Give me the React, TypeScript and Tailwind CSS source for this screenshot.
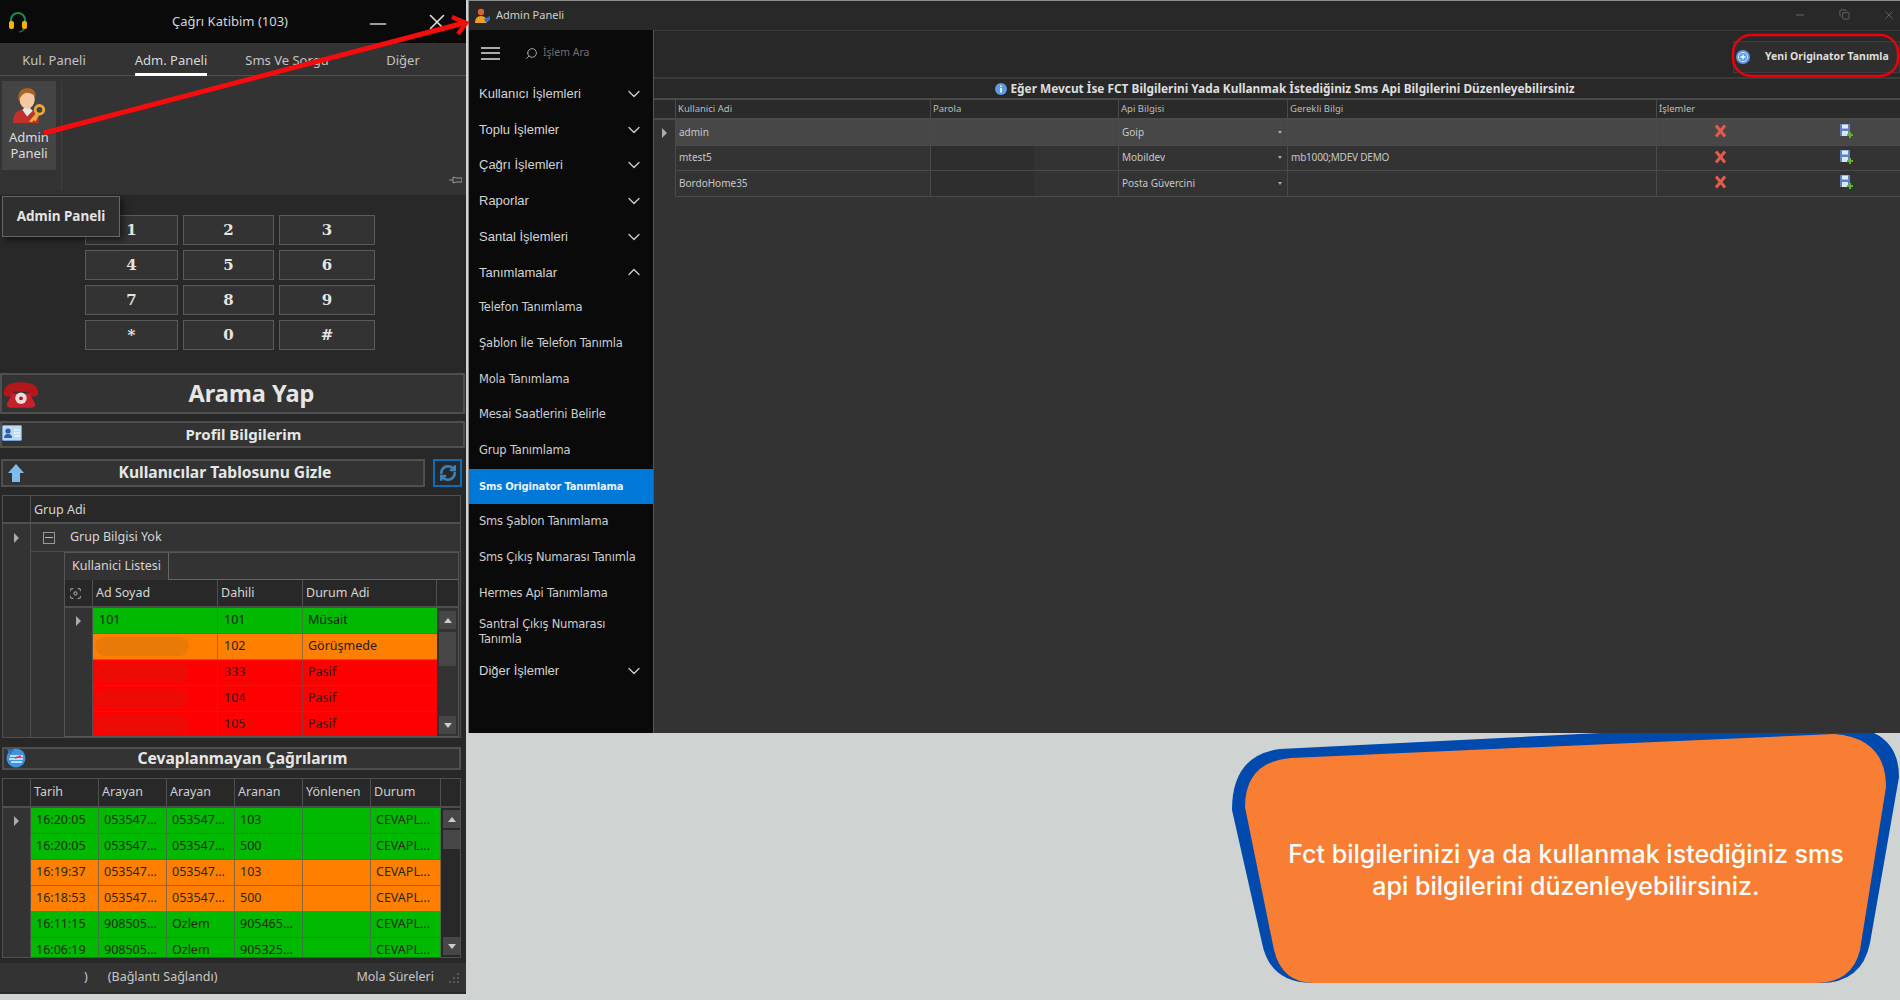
import React from "react";
import { ChevronDown, ChevronUp, Focus, Search, Minus, X, RefreshCw, Copy } from "lucide-react";

const noto = "[font-family:'Noto_Sans',sans-serif]";

const keys = ["1", "2", "3", "4", "5", "6", "7", "8", "9", "*", "0", "#"];

const users = [
  { name: "101", ext: "101", status: "Müsait", color: "bg-[#00b900]", blob: "" },
  { name: "", ext: "102", status: "Görüşmede", color: "bg-[#ff8000]", blob: "bg-[#ea7a08]" },
  { name: "", ext: "333", status: "Pasif", color: "bg-[#fe0000]", blob: "bg-[#ee0b06]" },
  { name: "", ext: "104", status: "Pasif", color: "bg-[#fe0000]", blob: "bg-[#ee0b06]" },
  { name: "", ext: "105", status: "Pasif", color: "bg-[#fe0000]", blob: "bg-[#ee0b06]" },
];

const calls = [
  ["16:20:05", "053547...", "053547...", "103", "", "CEVAPL...", "g"],
  ["16:20:05", "053547...", "053547...", "500", "", "CEVAPL...", "g"],
  ["16:19:37", "053547...", "053547...", "103", "", "CEVAPL...", "o"],
  ["16:18:53", "053547...", "053547...", "500", "", "CEVAPL...", "o"],
  ["16:11:15", "908505...", "Ozlem", "905465...", "", "CEVAPL...", "g"],
  ["16:06:19", "908505...", "Ozlem", "905325...", "", "CEVAPL...", "g"],
];

const originators = [
  { user: "admin", api: "Goip", info: "" },
  { user: "mtest5", api: "Mobildev", info: "mb1000;MDEV DEMO" },
  { user: "BordoHome35", api: "Posta Güvercini", info: "" },
];

const menuTop = ["Kullanıcı İşlemleri", "Toplu İşlemler", "Çağrı İşlemleri", "Raporlar", "Santal İşlemleri"];
const menuSub = [
  "Telefon Tanımlama",
  "Şablon İle Telefon Tanımla",
  "Mola Tanımlama",
  "Mesai Saatlerini Belirle",
  "Grup Tanımlama",
  "Sms Originator Tanımlama",
  "Sms Şablon Tanımlama",
  "Sms Çıkış Numarası Tanımla",
  "Hermes Api Tanımlama",
];

function Headset() {
  return (
    <svg width="22" height="22" viewBox="0 0 22 22">
      <path d="M4 12V9a7 7 0 0 1 14 0v3" fill="none" stroke="#1c8c46" strokeWidth="2" />
      <rect x="2" y="10" width="5" height="8" rx="2" fill="#f4b400" />
      <rect x="15" y="10" width="5" height="8" rx="2" fill="#f4b400" />
      <path d="M17 18q-2 3-5 3" fill="none" stroke="#1c8c46" strokeWidth="1.2" />
    </svg>
  );
}

function AdminIcon() {
  return (
    <svg width="36" height="38" viewBox="0 0 36 40">
      <path d="M1 38q0-12 9-14l6-1 6 2q5 2 6 6v7z" fill="#c22f2c" />
      <path d="M11 24l5 7 6-6-3-3h-6z" fill="#e8e6e0" />
      <ellipse cx="16" cy="13" rx="8" ry="10" fill="#f5c9a0" />
      <path d="M7 15Q5 2 16 1q9 0 9 9-4-4-10-4-5 1-8 9z" fill="#a8622a" />
      <circle cx="29" cy="24" r="4.5" fill="none" stroke="#e8a93c" strokeWidth="3" />
      <path d="M26 27l-8 9 3 1 2-2 2 1 4-7" fill="#e8a93c" />
    </svg>
  );
}

function PhoneIcon() {
  return (
    <svg width="38" height="29" viewBox="0 0 40 30">
      <path d="M2 13Q2 2 20 2t18 11q0 4-3 4h-5q-2 0-2-5H12q0 5-2 5H5q-3 0-3-4z" fill="#b3171c" />
      <path d="M11 14h18l6 11q0 4-4 4H9q-4 0-4-4z" fill="#c8202a" />
      <circle cx="20" cy="19" r="6" fill="#eedddd" />
      <circle cx="20" cy="19" r="2" fill="#a8161c" />
    </svg>
  );
}

function CardIcon() {
  return (
    <svg width="20" height="16" viewBox="0 0 20 16">
      <rect x="0.5" y="0.5" width="19" height="15" rx="1" fill="#bcd8f2" stroke="#6ea4d8" />
      <circle cx="6" cy="6" r="2.6" fill="#2f5f9e" />
      <path d="M2 13q0-4 4-4t4 4z" fill="#2f5f9e" />
      <path d="M12 5h6M12 8h6M12 11h6" stroke="#ffffff" strokeWidth="1.2" />
    </svg>
  );
}

function UpArrow() {
  return (
    <svg width="16" height="18" viewBox="0 0 16 18">
      <path d="M8 0l8 9h-4v9H4V9H0z" fill="#7fbcec" />
    </svg>
  );
}

function MissedIcon() {
  return (
    <svg width="20" height="20" viewBox="0 0 20 20">
      <circle cx="10" cy="10" r="9.5" fill="#3f93dd" />
      <path d="M4 8h13M3 11h14M5 14h11" stroke="#e9f3fb" strokeWidth="1.6" />
      <path d="M9 10l6-2" stroke="#d6332a" strokeWidth="1.4" />
      <path d="M1 1l7 1-4 5z" fill="#2e79bd" />
    </svg>
  );
}

function SaveIcon() {
  return (
    <svg width="13" height="14" viewBox="0 0 13 14">
      <rect x="0" y="0" width="10" height="12" fill="#5f82bd" />
      <rect x="2" y="0.5" width="6" height="4" fill="#e4ebf4" />
      <rect x="2" y="7" width="6" height="5" fill="#dfe5ee" />
      <path d="M10 8v6M7 11h6" stroke="#5cb531" strokeWidth="2" />
    </svg>
  );
}

function RedX() {
  return (
    <svg width="13" height="14" viewBox="0 0 13 14">
      <path d="M2 1.5l9 11M11 1.5l-9 11" stroke="#e65a4c" strokeWidth="3" />
    </svg>
  );
}

function Arrowhead({ down = false }: { down?: boolean }) {
  return (
    <div className="w-[17px] h-[18px] bg-[#474747] flex items-center justify-center">
      <div
        className={
          down
            ? "w-0 h-0 border-x-4 border-x-transparent border-t-[5px] border-t-[#ccc]"
            : "w-0 h-0 border-x-4 border-x-transparent border-b-[5px] border-b-[#ccc]"
        }
      />
    </div>
  );
}

function RowMarker() {
  return <div className="w-0 h-0 border-y-[5px] border-y-transparent border-l-[5px] border-l-[#aaa]" />;
}

function BarButton({ className, children }: { className: string; children: React.ReactNode }) {
  return (
    <div className={`relative flex items-center justify-center border-2 border-[#4f4f4f] bg-[#333] font-bold text-[#e6e6e6] ${className}`}>
      {children}
    </div>
  );
}

function LeftPanel() {
  return (
    <div className={`w-[466px] h-[994px] shrink-0 flex flex-col bg-[#282828] text-[#d6d6d6] ${noto}`}>
      <div className="h-[43px] shrink-0 bg-[#0a0a0a] flex items-center relative">
        <div className="pl-[7px]">
          <Headset />
        </div>
        <div className="w-[460px] ml-[-29px] text-center text-[13px]">Çağrı Katibim (103)</div>
        <Minus className="absolute left-[365px] top-[11px] text-[#ccc]" size={26} strokeWidth={1.5} />
        <X className="absolute left-[424px] top-[9px] text-[#ddd]" size={26} strokeWidth={1.5} />
      </div>

      <div className="h-[33px] shrink-0 bg-[#333] grid grid-cols-[108px_126px_106px_126px] border-b border-[#505050] text-[13px] text-[#c4c4c4]">
        <div className="text-center pt-[8px]">Kul. Paneli</div>
        <div className="pt-[8px] flex justify-center">
          <div className="h-[25px] border-b-[3px] border-white text-[#d8d8d8]">Adm. Paneli</div>
        </div>
        <div className="text-center pt-[8px]">Sms Ve Sorgu</div>
        <div className="text-center pt-[8px]">Diğer</div>
      </div>

      <div className="h-[120px] shrink-0 bg-[#333] flex relative border-b border-[#262626]">
        <div className="w-[54px] h-[89px] ml-[2px] mt-[5px] bg-[#444] flex flex-col items-center pt-[6px]">
          <AdminIcon />
          <div className="text-[13px] leading-[16px] text-center mt-[4px] text-[#ddd]">
            Admin
            <br />
            Paneli
          </div>
        </div>
        <div className="w-px h-[108px] mt-[6px] ml-[5px] bg-[#3f3f3f]" />
        <svg className="absolute left-[449px] top-[99px]" width="13" height="10" viewBox="0 0 13 10">
          <path d="M0 5h4M4 2l3 1h6v4H7L4 8z" fill="none" stroke="#999" />
        </svg>
      </div>

      <div className="h-[177px] shrink-0 relative pt-[19px] pl-[85px]">
        <div className="grid grid-cols-[93px_91px_96px] auto-rows-[30px] gap-[5px]">
          {keys.map((k) => (
            <div key={k} className="bg-[#333] border border-[#5a5a5a] flex items-center justify-center [font-family:'DejaVu_Serif',serif] font-bold text-[15px] text-[#e4e4e4]">
              {k}
            </div>
          ))}
        </div>
        <div className="absolute left-[2px] top-0 w-[118px] h-[41px] bg-[#2f2f2f] border border-[#666] shadow-[3px_3px_6px_rgba(0,0,0,0.5)] flex items-center justify-center font-bold text-[13.5px] text-[#e4e4e4]">
          Admin Paneli
        </div>
      </div>

      <BarButton className="h-[41px] shrink-0 w-[465px] text-[23.5px]">
        <div className="absolute left-[0px] top-[5px]">
          <PhoneIcon />
        </div>
        <span className="ml-[38px]">Arama Yap</span>
      </BarButton>

      <BarButton className="h-[27px] mt-[7px] shrink-0 w-[465px] text-[15px]">
        <div className="absolute left-[0px] top-[2px]">
          <CardIcon />
        </div>
        <span className="ml-[22px]">Profil Bilgilerim</span>
      </BarButton>

      <div className="flex h-[28px] mt-[11px] shrink-0 pl-px">
        <BarButton className="w-[424px] text-[15.6px]">
          <div className="absolute left-[5px] top-[3px]">
            <UpArrow />
          </div>
          <span className="ml-[24px]">Kullanıcılar Tablosunu Gizle</span>
        </BarButton>
        <div className="w-[29px] ml-[8px] border-2 border-[#0a6ebd] flex items-center justify-center">
          <RefreshCw size={18} strokeWidth={3.5} className="text-[#3a82b8]" />
        </div>
      </div>

      <div className="h-[243px] mt-[8px] shrink-0 mx-[2px] w-[459px] border border-[#4f4f4f] text-[13px] flex flex-col">
        <div className="h-[28px] shrink-0 flex border-b-2 border-[#4f4f4f]">
          <div className="w-[28px] border-r border-[#4f4f4f]" />
          <div className="pl-[3px] pt-[5px] text-[12.5px]">Grup Adi</div>
        </div>
        <div className="flex-1 flex min-h-0">
          <div className="w-[28px] shrink-0 bg-[#333] border-r border-[#4f4f4f] pt-[9px] pl-[11px]">
            <RowMarker />
          </div>
          <div className="flex-1 flex flex-col bg-[#333] min-w-0">
            <div className="h-[28px] shrink-0 flex items-center pl-[12px] gap-[15px] text-[12.5px] border-b border-[#4a4a4a]">
              <div className="w-[12px] h-[12px] border border-[#999] flex items-center justify-center">
                <div className="w-[8px] h-px bg-[#bbb]" />
              </div>
              <span>Grup Bilgisi Yok</span>
            </div>
            <div className="flex-1 ml-[33px] mr-[1px] min-h-0 flex flex-col border border-[#555]">
              <div className="h-[27px] shrink-0 border-b border-[#666] relative">
                <div className="absolute left-0 top-0 w-[104px] h-[27px] border-r border-[#666] bg-[#333] flex items-center justify-center text-[12.5px]">
                  Kullanici Listesi
                </div>
              </div>
              <div className="flex-1 min-h-0 flex flex-col">
                <div className="h-[28px] shrink-0 grid grid-cols-[28px_125px_85px_134px_21px] bg-[#282828] border-b-2 border-[#4f4f4f] text-[12.5px]">
                  <div className="border-r border-[#4f4f4f] flex items-center justify-center pr-[6px]">
                    <Focus size={13} strokeWidth={2} className="text-[#999]" />
                  </div>
                  <div className="border-r border-[#4f4f4f] pl-[3px] pt-[4px]">Ad Soyad</div>
                  <div className="border-r border-[#4f4f4f] pl-[3px] pt-[4px]">Dahili</div>
                  <div className="border-r border-[#4f4f4f] pl-[3px] pt-[4px]">Durum Adi</div>
                  <div />
                </div>
                <div className="flex-1 min-h-0 flex overflow-hidden">
                  <div className="w-[372px] shrink-0">
                    {users.map((u, i) => (
                      <div key={u.ext} className="h-[26px] grid grid-cols-[28px_125px_85px_134px] text-[12.5px] text-[#1d1d1d]">
                        <div className="flex items-center pl-[11px] border-r border-[#4f4f4f] bg-[#333]">{i === 0 && <RowMarker />}</div>
                        <div className={`${u.color} border-r border-b border-[#5a5a5a]/60 flex items-center pl-[6px]`}>
                          {u.blob ? <div className={`w-[94px] h-[19px] rounded-full ml-[-4px] ${u.blob}`} /> : u.name}
                        </div>
                        <div className={`${u.color} border-r border-b border-[#5a5a5a]/60 flex items-center pl-[6px]`}>{u.ext}</div>
                        <div className={`${u.color} border-b border-[#5a5a5a]/60 flex items-center pl-[5px]`}>{u.status}</div>
                      </div>
                    ))}
                  </div>
                  <div className="flex-1 flex flex-col pl-[2px] pt-[3px] pb-[2px]">
                    <Arrowhead />
                    <div className="w-[17px] h-[34px] mt-[3px] bg-[#474747]" />
                    <div className="flex-1" />
                    <Arrowhead down />
                  </div>
                </div>
              </div>
            </div>
          </div>
        </div>
      </div>

      <BarButton className="h-[23px] mt-[9px] ml-[2px] w-[459px] shrink-0 text-[15.6px]">
        <div className="absolute left-[2px] top-[-1px]">
          <MissedIcon />
        </div>
        <span className="ml-[22px]">Cevaplanmayan Çağrılarım</span>
      </BarButton>

      <div className="h-[180px] mt-[8px] ml-[2px] w-[459px] shrink-0 border border-[#4f4f4f] text-[12.5px] flex flex-col overflow-hidden">
        <div className="h-[29px] shrink-0 grid grid-cols-[28px_68px_68px_68px_68px_68px_70px_1fr] border-b-2 border-[#4f4f4f] text-[#cfcfcf]">
          <div className="border-r border-[#4f4f4f]" />
          {["Tarih", "Arayan", "Arayan", "Aranan", "Yönlenen", "Durum"].map((h, i) => (
            <div key={i} className="border-r border-[#4f4f4f] pl-[3px] pt-[4px] whitespace-nowrap">
              {h}
            </div>
          ))}
        </div>
        <div className="flex-1 flex min-h-0 overflow-hidden">
          <div className="w-[438px] shrink-0">
            {calls.map((c, i) => {
              const bg = c[6] === "g" ? "bg-[#00b900]" : "bg-[#ff8000]";
              return (
                <div key={i} className="h-[26px] grid grid-cols-[28px_68px_68px_68px_68px_68px_70px] text-[#1d2a12]">
                  <div className="flex items-center pl-[11px] bg-[#333] border-r border-[#4f4f4f]">{i === 0 && <RowMarker />}</div>
                  {c.slice(0, 6).map((v, j) => (
                    <div key={j} className={`${bg} flex items-center pl-[5px] border-r border-b border-[#5a5a5a]/70 whitespace-nowrap overflow-hidden`}>
                      {v}
                    </div>
                  ))}
                </div>
              );
            })}
          </div>
          <div className="flex-1 flex flex-col pl-[2px] pt-[2px] pb-[2px]">
            <Arrowhead />
            <div className="w-[17px] h-[19px] mt-[2px] bg-[#474747]" />
            <div className="flex-1" />
            <Arrowhead down />
          </div>
        </div>
      </div>

      <div className="h-[29px] mt-[5px] shrink-0 bg-[#333] flex items-center relative text-[12.5px] text-[#c8c8c8]">
        <span className="ml-[84px]">)</span>
        <span className="ml-[20px]">(Bağlantı Sağlandı)</span>
        <span className="ml-auto mr-[32px]">Mola Süreleri</span>
        <div className="absolute left-[449px] top-[10px] grid grid-cols-3 gap-[2px]">
          {[0, 1, 2, 3, 4, 5, 6, 7, 8].map((n) => (
            <div key={n} className={n === 0 || n === 1 || n === 3 ? "w-[2px] h-[2px]" : "w-[2px] h-[2px] bg-[#5a5a5a]"} />
          ))}
        </div>
      </div>
      <div className="flex-1 bg-[#282828]" />
    </div>
  );
}

function Sidebar() {
  const sub = "h-[35.7px] shrink-0 flex items-center pl-[10px] text-[11.5px] text-[#cfcfcf] [font-family:'DejaVu_Sans',sans-serif] tracking-[-0.2px] whitespace-nowrap";
  const top = "h-[35.7px] shrink-0 flex items-center justify-between pl-[10px] pr-[9px] text-[13px] text-[#d4d4d4] [font-family:'Liberation_Sans',sans-serif]";
  return (
    <div className={`w-[185px] shrink-0 bg-[#0a0a0a] border-r border-[#555] flex flex-col ${noto}`}>
      <div className="h-[46px] shrink-0 flex items-center pl-[12px]">
        <div className="w-[19px] flex flex-col gap-[3.5px]">
          <div className="h-[2px] bg-[#aaa]" />
          <div className="h-[2px] bg-[#aaa]" />
          <div className="h-[2px] bg-[#aaa]" />
        </div>
        <Search size={13} strokeWidth={1.8} className="text-[#aaa] ml-[25px] -scale-x-100" />
        <span className="ml-[5px] text-[10.5px] text-[#707070]">İşlem Ara</span>
      </div>
      {menuTop.map((m) => (
        <div key={m} className={top}>
          <span>{m}</span>
          <ChevronDown size={20} strokeWidth={1.6} className="text-[#ccc]" />
        </div>
      ))}
      <div className={top}>
        <span>Tanımlamalar</span>
        <ChevronUp size={20} strokeWidth={1.6} className="text-[#ccc]" />
      </div>
      {menuSub.map((m) => (
        <div key={m} className={m === "Sms Originator Tanımlama" ? `${sub} bg-[#0078d7] font-bold !text-[#e8f2fb] !text-[10px]` : sub}>
          {m}
        </div>
      ))}
      <div className="h-[42px] shrink-0 flex items-center pl-[10px] text-[11.5px] leading-[15px] text-[#cfcfcf] [font-family:'DejaVu_Sans',sans-serif] tracking-[-0.2px]">
        Santral Çıkış Numarası
        <br />
        Tanımla
      </div>
      <div className={top}>
        <span>Diğer İşlemler</span>
        <ChevronDown size={20} strokeWidth={1.6} className="text-[#ccc]" />
      </div>
    </div>
  );
}

function AdminWindow() {
  const cols = "grid grid-cols-[22px_255px_188px_169px_369px_244px]";
  return (
    <div className={`ml-[2px] w-[1432px] h-[733px] flex flex-col border-l border-t border-[#8c8c8c] bg-[#333] ${noto}`}>
      <div className="h-[29px] shrink-0 bg-[#282828] flex items-center pl-[6px] relative">
        <svg width="16" height="16" viewBox="0 0 16 16">
          <circle cx="6" cy="4" r="3.2" fill="#d9642a" />
          <path d="M0 15q0-7 6-7t6 7z" fill="#f0a020" />
          <path d="M9 11l6-3v4l-4 3z" fill="#2f6fc0" />
        </svg>
        <span className="ml-[5px] text-[11px] text-[#cfcfcf]">Admin Paneli</span>
        <Minus size={12} className="absolute left-[1325px] top-[8px] text-[#666]" />
        <Copy size={11} className="absolute left-[1370px] top-[8px] text-[#666]" />
        <X size={14} strokeWidth={1.5} className="absolute left-[1413px] top-[7px] text-[#666]" />
      </div>
      <div className="flex-1 flex min-h-0">
        <Sidebar />
        <div className="flex-1 min-w-0 flex flex-col">
          <div className="h-[49px] shrink-0 bg-[#282828] border-b-2 border-t border-[#3a3a3a] flex justify-end items-start pt-[10px]">
            <div className="w-[167px] h-[32px] bg-[#2e2e2e] border border-[#3c3c3c] flex items-center pl-[1px] relative">
              <svg width="14" height="14" viewBox="0 0 14 14" className="ml-[1px]">
                <circle cx="7" cy="7" r="7" fill="#5d9ae0" />
                <circle cx="7" cy="7" r="4.6" fill="none" stroke="#d6e6f7" />
                <path d="M7 4.5v5M4.5 7h5" stroke="#fff" strokeWidth="1.3" />
              </svg>
              <span className="ml-[15px] text-[10.5px] font-bold text-[#dedede] whitespace-nowrap">Yeni Originator Tanımla</span>
            </div>
          </div>
          <div className="h-[19px] shrink-0 bg-[#282828] flex items-center justify-center pl-[16px] gap-[3px] text-[11.85px] font-bold text-[#dedede] whitespace-nowrap">
            <svg width="12" height="12" viewBox="0 0 12 12">
              <circle cx="6" cy="6" r="6" fill="#5d9ae0" />
              <path d="M6 2.6v1.4M6 5v4.4" stroke="#fff" strokeWidth="1.6" />
            </svg>
            Eğer Mevcut İse FCT Bilgilerini Yada Kullanmak İstediğiniz Sms Api Bilgilerini Düzenleyebilirsiniz
          </div>
          <div className={`${cols} h-[22px] shrink-0 bg-[#2a2a2a] border-y-2 border-[#4a4a4a] text-[9.5px] text-[#bdbdbd]`}>
            <div className="border-r border-[#4a4a4a]" />
            {["Kullanici Adi", "Parola", "Api Bilgisi", "Gerekli Bilgi"].map((h) => (
              <div key={h} className="border-r border-[#4a4a4a] pl-[2px] pt-[2px]">
                {h}
              </div>
            ))}
            <div className="pl-[2px] pt-[2px]">İşlemler</div>
          </div>
          {originators.map((o, i) => (
            <div key={o.user} className={`${cols} h-[25.5px] shrink-0 text-[10px] text-[#c8c8c8] ${i === 0 ? "bg-[#474747]" : "bg-[#333]"}`}>
              <div className="bg-[#333] border-r border-[#4a4a4a] flex items-center pl-[8px]">{i === 0 && <RowMarker />}</div>
              <div className="border-r border-b border-[#4a4a4a] flex items-center pl-[3px]">{o.user}</div>
              <div className="border-r border-b border-[#4a4a4a]">{i > 0 && <div className="w-[103px] h-full bg-[#2e2e2e]" />}</div>
              <div className="border-r border-b border-[#4a4a4a] flex items-center justify-between pl-[3px] pr-[5px]">
                {o.api}
                <div className="w-0 h-0 border-x-[2.5px] border-x-transparent border-t-[3px] border-t-[#aaa]" />
              </div>
              <div className="border-r border-b border-[#4a4a4a] flex items-center pl-[3px] tracking-[-0.2px]">{o.info}</div>
              <div className="border-b border-[#4a4a4a] flex items-center">
                <div className="ml-[57px] mt-[-2px]">
                  <RedX />
                </div>
                <div className="ml-[113px] mt-[-2px]">
                  <SaveIcon />
                </div>
              </div>
            </div>
          ))}
        </div>
      </div>
    </div>
  );
}

export default function App() {
  return (
    <div className="relative w-[1900px] h-[1000px] overflow-hidden bg-[#cfd3d2] flex items-start">
      <LeftPanel />
      <AdminWindow />

      {/* annotation arrow and highlight drawn over the two windows */}
      <svg className="absolute left-0 top-0 pointer-events-none" width="1900" height="1000" viewBox="0 0 1900 1000">
        <path d="M44 133L464 23" stroke="#f50c0c" strokeWidth="5" fill="none" />
        <path d="M452 17L466 23L458 34" stroke="#f50c0c" strokeWidth="4.5" fill="none" />
        <rect x="1733" y="35" width="165" height="41" rx="18" fill="none" stroke="#e8030c" strokeWidth="2.5" />
        <path
          d="M1262 943Q1270 983 1312 983H1820Q1862 983 1870 943L1899 777Q1899 745 1874 733H1600L1280 749Q1232 755 1232 810Z"
          fill="#004aad"
        />
        <path
          d="M1274 950Q1282 983 1314 983H1816Q1852 983 1860 950L1886 787Q1886 738 1834 734L1291 758Q1245 762 1245 807Z"
          fill="#f77e33"
        />
      </svg>
      <div className="absolute left-[1266px] top-[838px] w-[600px] text-center text-[25px] leading-[32px] font-medium text-white [font-family:Inter,sans-serif]">
        Fct bilgilerinizi ya da kullanmak istediğiniz sms
        <br />
        api bilgilerini düzenleyebilirsiniz.
      </div>
    </div>
  );
}
